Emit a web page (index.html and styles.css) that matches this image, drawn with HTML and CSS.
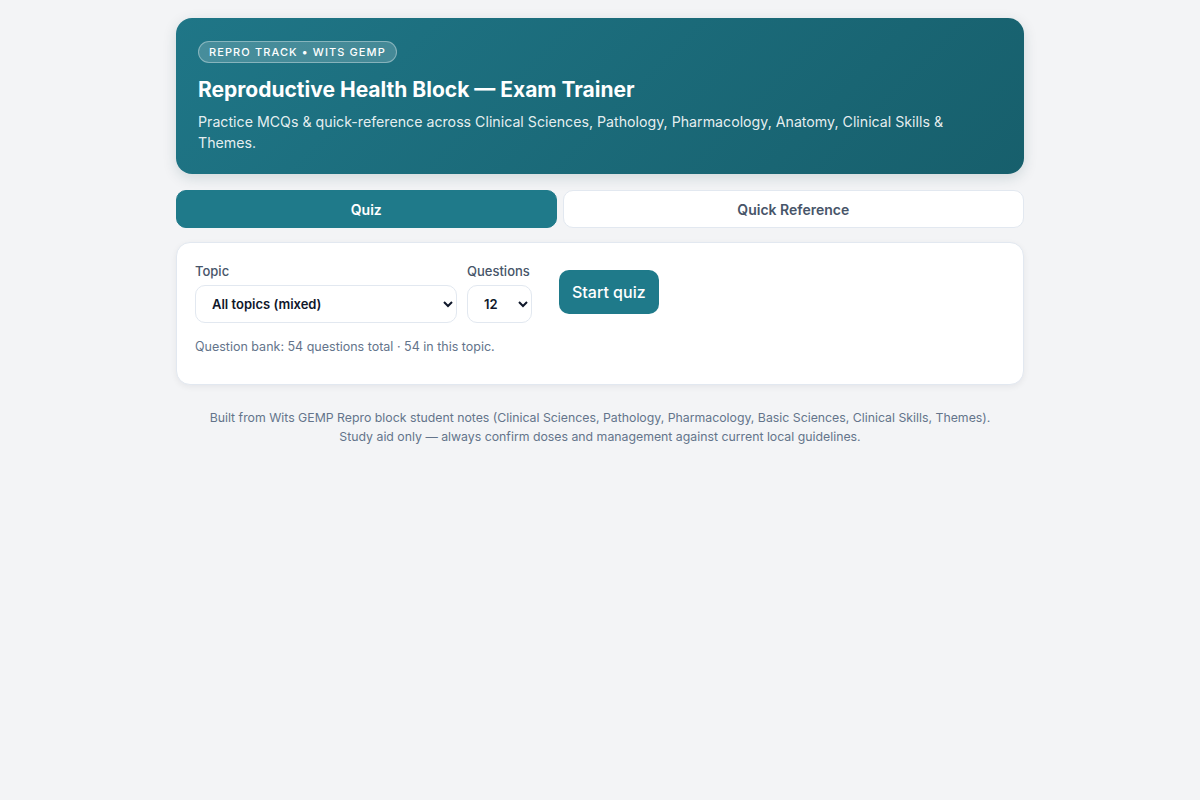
FILE: index.html
```html
<!DOCTYPE html>
<html lang="en">
<head>
    <meta charset="UTF-8">
    <meta name="viewport" content="width=device-width, initial-scale=1.0">
    <title>Reproductive Health Block — Exam Trainer</title>
    <link rel="stylesheet" href="styles.css">
</head>
<body>

<div class="wrap">
    <header class="hero">
        <span class="pill">Repro track • Wits GEMP</span>
        <h1>Reproductive Health Block — Exam Trainer</h1>
        <p>Practice MCQs &amp; quick-reference across Clinical Sciences, Pathology, Pharmacology, Anatomy, Clinical Skills &amp; Themes.</p>
    </header>

    <nav class="tabs">
        <button class="tab active">Quiz</button>
        <button class="tab">Quick Reference</button>
    </nav>

    <section class="card">
        <div class="controls">
            <label class="field">
                <span class="label">Topic</span>
                <select class="topic">
                    <option>All topics (mixed)</option>
                </select>
            </label>
            <label class="field">
                <span class="label">Questions</span>
                <select class="count">
                    <option>12</option>
                </select>
            </label>
            <button class="start">Start quiz</button>
        </div>
        <p class="note">Question bank: 54 questions total · 54 in this topic.</p>
    </section>

    <footer class="foot">
        Built from Wits GEMP Repro block student notes (Clinical Sciences, Pathology, Pharmacology, Basic Sciences, Clinical Skills, Themes).<br>
        Study aid only — always confirm doses and management against current local guidelines.
    </footer>
</div>

</body>
</html>
```

FILE: styles.css
```css
* {
    box-sizing: border-box;
}
body {
    margin: 0;
    background-color: #f3f4f6;
    font-family: Inter, "Noto Sans", sans-serif;
    color: #0f172a;
}
.wrap {
    max-width: 848px;
    margin: 18px auto;
}
.hero {
    background: linear-gradient(135deg, #1f7687 0%, #175f6c 100%);
    color: #fff;
    border-radius: 16px;
    padding: 22px 22px 21px;
    box-shadow: 0 4px 14px rgba(15, 60, 70, 0.15);
}
.pill {
    display: inline-block;
    font-size: 11px;
    font-weight: 500;
    letter-spacing: 1.1px;
    text-transform: uppercase;
    padding: 3px 10px;
    line-height: 14px;
    border-radius: 999px;
    background: rgba(255, 255, 255, 0.18);
    border: 1px solid rgba(255, 255, 255, 0.35);
}
.hero h1 {
    font-size: 21px;
    font-weight: 700;
    margin: 13px 0 7px;
    line-height: 28px;
}
.hero p {
    margin: 0;
    font-size: 14.2px;
    line-height: 21px;
    color: rgba(255, 255, 255, 0.9);
}
.tabs {
    display: flex;
    gap: 6px;
    margin-top: 16px;
}
.tab {
    flex: auto;
    height: 38px;
    border-radius: 10px;
    border: 1px solid #e2e8f0;
    background: #fff;
    color: #475569;
    font-family: inherit;
    font-size: 14px;
    font-weight: 600;
    cursor: pointer;
}
.tab.active {
    background: #1f7a8a;
    border-color: #1f7a8a;
    color: #fff;
}
.card {
    margin-top: 14px;
    background: #fff;
    border: 1px solid #e2e8f0;
    border-radius: 14px;
    padding: 19px 18px 30px;
    box-shadow: 0 2px 6px rgba(15, 23, 42, 0.06);
}
.controls {
    display: flex;
    gap: 10px;
    align-items: flex-start;
}
.field {
    display: flex;
    flex-direction: column;
    gap: 5px;
}
.label {
    font-size: 13px;
    font-weight: 500;
    color: #475569;
    line-height: 18px;
}
select {
    height: 38px;
    border: 1px solid #e2e8f0;
    border-radius: 10px;
    background: #fff;
    font-family: inherit;
    font-size: 13px;
    font-weight: 600;
    color: #0f172a;
    padding: 0 10px 0 12px;
}
.topic {
    width: 262px;
}
.count {
    width: 65px;
}
.start {
    margin-left: 17px;
    margin-top: 8px;
    height: 44px;
    padding: 0 13px;
    border: none;
    border-radius: 10px;
    background: #1f7a8a;
    color: #fff;
    font-family: inherit;
    font-size: 16px;
    font-weight: 500;
    cursor: pointer;
}
.note {
    margin: 16px 0 0;
    font-size: 12.5px;
    color: #64748b;
}
.foot {
    margin-top: 23px;
    text-align: center;
    font-size: 12.3px;
    line-height: 19px;
    color: #64748b;
}
```
